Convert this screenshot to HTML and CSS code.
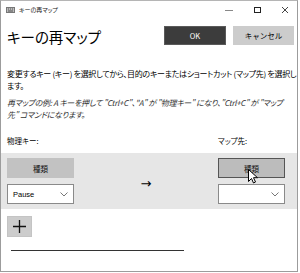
FILE: index.html
```html
<!DOCTYPE html>
<html lang="ja">
<head>
  <meta charset="UTF-8">
  <title>キーの再マップ</title>
  <link rel="stylesheet" href="styles.css">
</head>
<body>

<div class="window">
  <!-- タイトルバー -->
  <div class="titlebar">
    <svg class="app-icon" width="9" height="6" viewBox="0 0 9 6">
      <rect x="0.5" y="0.5" width="8" height="5" fill="#bbb" stroke="#777"/>
      <path d="M2 2h1M4 2h1M6 2h1M2 4h5" stroke="#555" stroke-width="1"/>
    </svg>
    <span class="title">キーの再マップ</span>
    <div class="caption">
      <svg width="8" height="8" viewBox="0 0 8 8"><path d="M0 4.5h8" stroke="#888"/></svg>
      <svg width="8" height="8" viewBox="0 0 8 8"><rect x="1.5" y="1.5" width="6" height="5" fill="none" stroke="#222"/></svg>
      <svg width="8" height="8" viewBox="0 0 8 8"><path d="M1 1l6 6M7 1l-6 6" stroke="#444"/></svg>
    </div>
  </div>

  <div class="content">
    <div class="header">
      <h1>キーの再マップ</h1>
      <div class="actions">
        <button class="btn btn-ok">OK</button>
        <button class="btn btn-cancel">キャンセル</button>
      </div>
    </div>

    <p class="desc">変更するキー (キー) を選択してから、目的のキーまたはショートカット (マップ先) を選択し<br>ます。</p>
    <p class="example">再マップの例: A キーを押して "Ctrl+C"、"A" が "物理キー" になり、"Ctrl+C" が "マップ<br>先" コマンドになります。</p>

    <div class="labels">
      <span>物理キー:</span>
      <span class="label-right">マップ先:</span>
    </div>
  </div>

  <!-- マッピング行 -->
  <div class="row">
    <div class="col">
      <button class="type-btn">種類</button>
      <div class="select">
        <span>Pause</span>
        <svg width="8" height="5" viewBox="0 0 8 5"><path d="M0.5 0.5l3.5 3.5 3.5-3.5" fill="none" stroke="#777"/></svg>
      </div>
    </div>
    <div class="arrow">→</div>
    <div class="col">
      <button class="type-btn hover">種類</button>
      <div class="select">
        <span></span>
        <svg width="8" height="5" viewBox="0 0 8 5"><path d="M0.5 0.5l3.5 3.5 3.5-3.5" fill="none" stroke="#777"/></svg>
      </div>
    </div>
  </div>

  <div class="footer">
    <button class="add-btn">
      <svg width="13" height="13" viewBox="0 0 13 13"><path d="M6.5 0v13M0 6.5h13" stroke="#111" stroke-width="1.3"/></svg>
    </button>
    <div class="divider"></div>
  </div>

  <!-- マウスカーソル -->
  <svg class="cursor" width="10" height="15" viewBox="0 0 10 15">
    <path d="M0.5 0.5v12l3-3 2 4.5 2-1-2-4.3h4z" fill="#fff" stroke="#000" stroke-width="1"/>
  </svg>
</div>

</body>
</html>
```

FILE: styles.css
```css
* {
  box-sizing: border-box;
}
body {
  margin: 0;
  background: #fff;
  font-family: "Noto Sans CJK JP", "Noto Sans", sans-serif;
  font-feature-settings: "palt";
  color: #000;
}
.window {
  position: relative;
  width: 298px;
  height: 272px;
  border: 1px solid #9c9c9c;
  border-top-color: #b5b5b5;
  overflow: hidden;
  background: #fff;
}
/* タイトルバー */
.titlebar {
  display: flex;
  align-items: center;
  height: 17px;
  padding-left: 5px;
}
.app-icon {
  margin-right: 4px;
}
.title {
  font-size: 6px;
  color: #222;
}
.caption {
  margin-left: auto;
  display: flex;
  gap: 20px;
  padding-right: 8px;
}
.content {
  padding: 0 3px 0 6px;
}
.header {
  display: flex;
  align-items: center;
  margin-top: 8px;
  height: 19px;
}
h1 {
  margin: 2px 0 0;
  font-size: 14.5px;
  font-weight: normal;
  line-height: 19px;
}
.actions {
  margin-left: auto;
  display: flex;
  gap: 7px;
}
.btn {
  height: 19px;
  border: 1px solid transparent;
  font-family: inherit;
  font-size: 7.5px;
  padding: 0;
}
.btn-ok {
  width: 62px;
  background: #3c3c3c;
  border-color: #5a5a5a;
  color: #fff;
}
.btn-cancel {
  width: 61px;
  background: #cccccc;
  color: #000;
}
.desc,
.example {
  margin: 0;
  font-size: 8px;
  line-height: 12px;
  letter-spacing: -0.3px;
  white-space: nowrap;
}
.desc {
  margin-top: 23px;
}
.example {
  margin-top: 5px;
  font-style: italic;
  color: #333;
}
.labels {
  display: flex;
  margin-top: 14px;
  font-size: 7.5px;
  line-height: 12px;
  padding-right: 9px;
}
.label-right {
  margin-left: auto;
  width: 67px;
}
/* マッピング行 */
.row {
  display: flex;
  align-items: center;
  justify-content: space-between;
  margin-top: 6px;
  height: 56px;
  padding: 0 12px 0 6px;
  background: #e6e6e6;
}
.col {
  display: flex;
  flex-direction: column;
  gap: 6px;
  width: 67px;
}
.type-btn {
  height: 20px;
  background: #c2c2c2;
  border: 1px solid #c2c2c2;
  font-family: inherit;
  font-size: 7.5px;
  color: #111;
  padding: 0;
}
.type-btn.hover {
  background: #bcbcbc;
  border-color: #555;
}
.select {
  display: flex;
  align-items: center;
  justify-content: space-between;
  height: 20px;
  padding: 0 5px 0 5px;
  background: #fff;
  border: 1px solid #8a8a8a;
  font-size: 7.5px;
  font-family: "Liberation Sans", sans-serif;
}
.arrow {
  font-family: "DejaVu Sans", sans-serif;
  font-size: 13px;
  line-height: 13px;
  margin-top: 4px;
}
.footer {
  padding: 7px 0 0 6px;
}
.add-btn {
  display: flex;
  align-items: center;
  justify-content: center;
  width: 25px;
  height: 21px;
  padding: 0;
  background: #cccccc;
  border: 1px solid #c4c4c4;
}
.divider {
  margin: 13px 0 0 4px;
  width: 173px;
  height: 1px;
  background: #333;
}
.cursor {
  position: absolute;
  left: 247px;
  top: 168px;
}
```
